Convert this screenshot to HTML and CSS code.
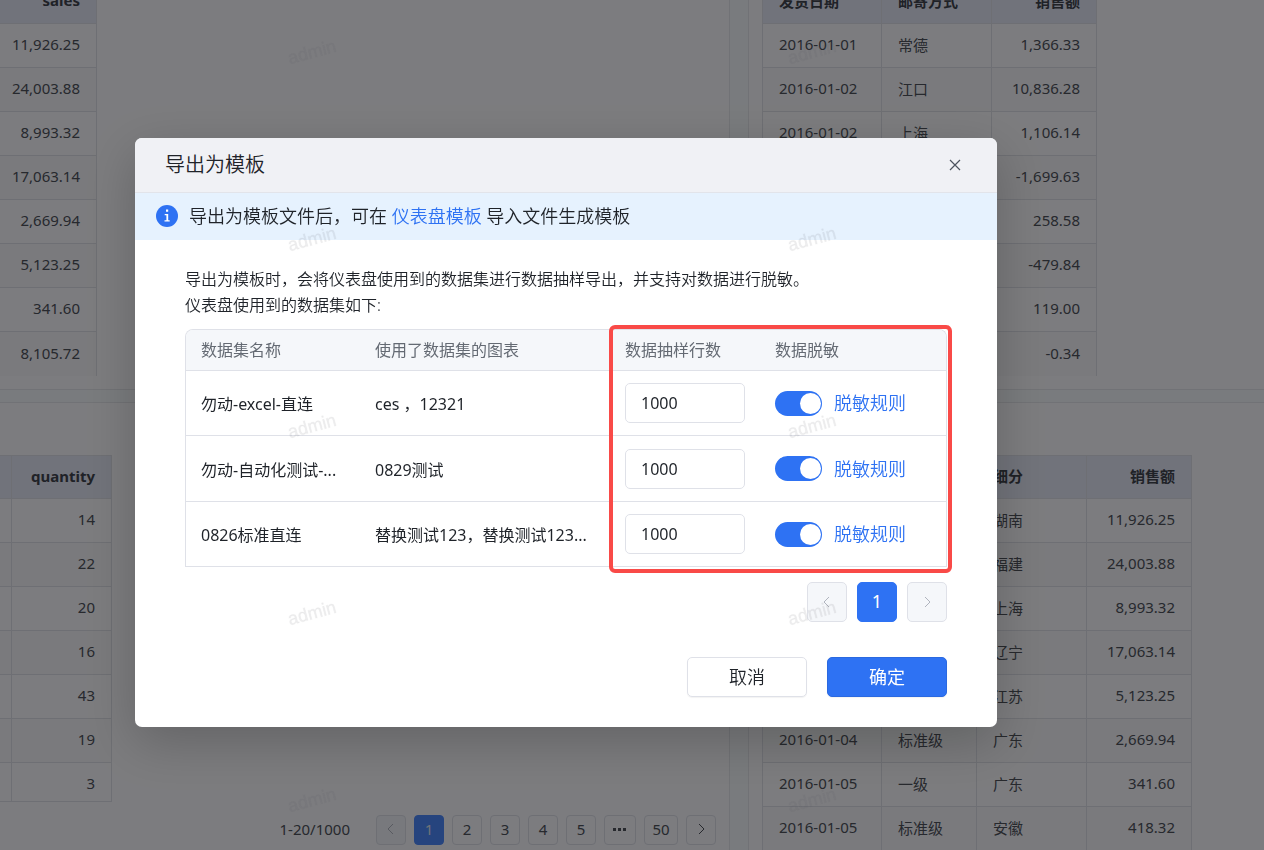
FILE: index.html
```html
<!DOCTYPE html>
<html lang="zh-CN">
<head>
<meta charset="utf-8">
<title>导出为模板</title>
<link rel="stylesheet" href="styles.css">
</head>
<body>
<main class="board">
  <section class="panel panel-top">
    <table class="grid grid-sales">
      <thead><tr><th class="num">sales</th></tr></thead>
      <tbody>
        <tr><td class="num">11,926.25</td></tr>
        <tr><td class="num">24,003.88</td></tr>
        <tr><td class="num">8,993.32</td></tr>
        <tr><td class="num">17,063.14</td></tr>
        <tr><td class="num">2,669.94</td></tr>
        <tr><td class="num">5,123.25</td></tr>
        <tr><td class="num">341.60</td></tr>
        <tr><td class="num">8,105.72</td></tr>
      </tbody>
    </table>
  </section>
  <section class="panel panel-top panel-right">
    <table class="grid grid-ship">
      <colgroup><col class="c-date"><col class="c-area"><col class="c-num"></colgroup>
      <thead><tr><th>发货日期</th><th>邮寄方式</th><th class="num">销售额</th></tr></thead>
      <tbody>
        <tr><td>2016-01-01</td><td>常德</td><td class="num">1,366.33</td></tr>
        <tr><td>2016-01-02</td><td>江口</td><td class="num">10,836.28</td></tr>
        <tr><td>2016-01-02</td><td>上海</td><td class="num">1,106.14</td></tr>
        <tr><td></td><td></td><td class="num">-1,699.63</td></tr>
        <tr><td></td><td></td><td class="num">258.58</td></tr>
        <tr><td></td><td></td><td class="num">-479.84</td></tr>
        <tr><td></td><td></td><td class="num">119.00</td></tr>
        <tr><td></td><td></td><td class="num">-0.34</td></tr>
      </tbody>
    </table>
  </section>
  <section class="panel panel-bottom">
    <div class="clip">
      <table class="grid grid-qty">
        <colgroup><col class="c-sliver"><col class="c-qty"></colgroup>
        <thead><tr><th></th><th class="num">quantity</th></tr></thead>
        <tbody>
          <tr><td></td><td class="num">14</td></tr>
          <tr><td></td><td class="num">22</td></tr>
          <tr><td></td><td class="num">20</td></tr>
          <tr><td></td><td class="num">16</td></tr>
          <tr><td></td><td class="num">43</td></tr>
          <tr><td></td><td class="num">19</td></tr>
          <tr><td></td><td class="num">3</td></tr>
        </tbody>
      </table>
    </div>
    <nav class="pager" aria-label="分页">
      <span class="pager-total">1-20/1000</span>
      <button class="page off" aria-label="上一页" disabled><svg viewBox="0 0 12 12"><path d="M8 1 3 6l5 5"/></svg></button>
      <button class="page current">1</button>
      <button class="page">2</button>
      <button class="page">3</button>
      <button class="page">4</button>
      <button class="page">5</button>
      <button class="page dots" aria-label="更多"><svg viewBox="0 0 14 4"><path d="M0 1h3v3H0zM5 1h3v3H5zM10 1h3v3h-3z"/></svg></button>
      <button class="page wide">50</button>
      <button class="page" aria-label="下一页"><svg viewBox="0 0 12 12"><path d="m4 1 5 5-5 5"/></svg></button>
    </nav>
  </section>
  <section class="panel panel-bottom panel-right">
    <table class="grid grid-region">
      <colgroup><col class="c-date"><col class="c-mode"><col class="c-area"><col class="c-num"></colgroup>
      <thead><tr><th></th><th></th><th>细分</th><th class="num">销售额</th></tr></thead>
      <tbody>
        <tr><td></td><td></td><td>湖南</td><td class="num">11,926.25</td></tr>
        <tr><td></td><td></td><td>福建</td><td class="num">24,003.88</td></tr>
        <tr><td></td><td></td><td>上海</td><td class="num">8,993.32</td></tr>
        <tr><td></td><td></td><td>辽宁</td><td class="num">17,063.14</td></tr>
        <tr><td></td><td></td><td>江苏</td><td class="num">5,123.25</td></tr>
        <tr><td>2016-01-04</td><td>标准级</td><td>广东</td><td class="num">2,669.94</td></tr>
        <tr><td>2016-01-05</td><td>一级</td><td>广东</td><td class="num">341.60</td></tr>
        <tr><td>2016-01-05</td><td>标准级</td><td>安徽</td><td class="num">418.32</td></tr>
      </tbody>
    </table>
  </section>
</main>

<div class="mask">
  <div class="dialog" role="dialog" aria-modal="true" aria-labelledby="dialog-title">
    <header class="dialog-head">
      <h1 class="dialog-title" id="dialog-title">导出为模板</h1>
      <button class="close" aria-label="关闭"><svg viewBox="0 0 12 12"><path d="m1 1 10 10M11 1 1 11"/></svg></button>
    </header>
    <div class="notice">
      <svg class="notice-icon" viewBox="0 0 22 22"><circle cx="11" cy="11" r="11" fill="#2e72f3"/><path d="M10 4.500h2.200v2.200H10zM8.700 9h3.500v6.200h1.500v1.300H8.500v-1.300h1.900v-4.900H8.700z" fill="#fff"/></svg>
      <p class="notice-text">导出为模板文件后，可在 <a href="#">仪表盘模板</a> 导入文件生成模板</p>
    </div>
    <div class="dialog-body">
      <p class="intro">导出为模板时，会将仪表盘使用到的数据集进行数据抽样导出，并支持对数据进行脱敏。<br>仪表盘使用到的数据集如下:</p>
      <div class="sets-wrap">
        <table class="sets">
          <colgroup><col class="s-name"><col class="s-chart"><col class="s-rows"><col></colgroup>
          <thead><tr><th>数据集名称</th><th>使用了数据集的图表</th><th>数据抽样行数</th><th>数据脱敏</th></tr></thead>
          <tbody>
            <tr>
              <td>勿动-excel-直连</td><td>ces ，12321</td>
              <td><input class="rows" type="text" value="1000" aria-label="数据抽样行数"></td>
              <td><div class="mask-cell"><input class="switch" type="checkbox" checked aria-label="数据脱敏"><a href="#">脱敏规则</a></div></td>
            </tr>
            <tr>
              <td>勿动-自动化测试-...</td><td>0829测试</td>
              <td><input class="rows" type="text" value="1000" aria-label="数据抽样行数"></td>
              <td><div class="mask-cell"><input class="switch" type="checkbox" checked aria-label="数据脱敏"><a href="#">脱敏规则</a></div></td>
            </tr>
            <tr>
              <td>0826标准直连</td><td>替换测试123，替换测试123...</td>
              <td><input class="rows" type="text" value="1000" aria-label="数据抽样行数"></td>
              <td><div class="mask-cell"><input class="switch" type="checkbox" checked aria-label="数据脱敏"><a href="#">脱敏规则</a></div></td>
            </tr>
          </tbody>
        </table>
        <div class="highlight"></div>
      </div>
      <nav class="sets-pager" aria-label="数据集分页">
        <button class="step" aria-label="上一页" disabled><svg viewBox="0 0 12 12"><path d="M8 1 3 6l5 5"/></svg></button>
        <button class="step current">1</button>
        <button class="step" aria-label="下一页" disabled><svg viewBox="0 0 12 12"><path d="m4 1 5 5-5 5"/></svg></button>
      </nav>
      <footer class="actions">
        <button class="btn">取消</button>
        <button class="btn primary">确定</button>
      </footer>
    </div>
  </div>
</div>

<div class="watermark" aria-hidden="true">
  <span>admin</span><span>admin</span><span>admin</span><span>admin</span><span>admin</span>
  <span>admin</span><span>admin</span><span>admin</span><span>admin</span><span>admin</span>
</div>
</body>
</html>
```
FILE: styles.css
```css
* { box-sizing: border-box; }

body {
  margin: 0;
  height: 100vh;
  overflow: hidden;
  font-family: "Noto Sans", "Noto Sans CJK SC", sans-serif;
  font-size: 16px;
  color: #1f2329;
  background: #f3f6fa;
}

button, input { font: inherit; color: inherit; }
a { color: #2e72f3; text-decoration: none; }
h1, p { margin: 0; font-weight: 400; }

/* dashboard */
.board {
  display: grid;
  grid-template-columns: 730fr 516fr;
  grid-template-rows: auto minmax(0, 1fr);
  gap: 12px 18px;
  height: 100vh;
  font-size: 15px;
  color: #4e525a;
}
.panel {
  display: flex;
  flex-direction: column;
  align-items: flex-start;
  min-width: 0;
  overflow: hidden;
  background: #f8f9fd;
  border: 0 solid #e2e4ea;
}
.panel-top { padding-bottom: 13px; border-bottom-width: 1px; border-right-width: 1px; }
.panel-bottom { padding-top: 52px; border-top-width: 1px; border-right-width: 1px; }
.panel-right { padding-left: 13px; border-left-width: 1px; border-right-width: 0; }
.panel-top .grid { margin-top: -20px; }

.grid { table-layout: fixed; border-collapse: separate; border-spacing: 0; border-right: 1px solid #dcdee7; }
.grid th, .grid td {
  height: 44px;
  padding: 0 16px 3px;
  text-align: left;
  white-space: nowrap;
  border: 0 solid #dcdee7;
  border-width: 0 0 1px 1px;
}
.grid th { font-weight: 700; background: #e2e6f5; color: #40444d; }
.grid .num { text-align: right; }
.grid tbody tr:nth-child(even) { background: #f4f5f9; }
.panel-top .grid tbody tr:last-child td { border-bottom: 0; }
.panel-bottom .grid th { border-top-width: 1px; }
.grid tr > :first-child { border-left-width: 0; }
.panel-right .grid tr > :first-child { border-left-width: 1px; }
.grid .c-date { width: 119px; }
.grid .c-mode { width: 95px; }
.grid .c-area { width: 110px; }
.grid .c-num { width: 105px; }
.grid .c-sliver { width: 11px; }
.grid .c-qty { width: 100px; }
.grid-sales { width: 97px; }
.grid-sales th, .grid-sales td { padding-left: 0; }
.grid-ship { width: 335px; }
.grid-qty { width: 112px; }
.grid-qty tr > :first-child { padding: 0; }
.grid-region { width: 430px; }

.clip { flex: 1; min-height: 0; overflow: hidden; border-bottom: 1px solid #dcdee7; }

.pager {
  display: flex;
  align-items: center;
  align-self: stretch;
  justify-content: flex-end;
  gap: 8px;
  padding: 13px 13px 5px;
}
.pager-total { margin-right: 18px; line-height: 20px; padding-bottom: 2px; }
.page {
  display: flex;
  align-items: center;
  justify-content: center;
  min-width: 30px;
  height: 30px;
  padding: 0 0 2px;
  border: 1px solid #dcdee7;
  border-radius: 4px;
  background: transparent;
}
.page svg, .step svg, .close svg { width: 12px; height: 12px; fill: none; stroke: currentColor; stroke-width: 1; }
.page.off { background: #f0f3f8; color: #b0b4be; }
.page.current { background: #4c88fa; border-color: #4c88fa; color: #dfe4ee; }
.page.dots { width: 32px; }
.page.dots svg { width: 14px; height: 4px; fill: currentColor; stroke: none; }
.page.wide { width: 34px; }

/* dialog */
.mask {
  position: fixed;
  inset: 0;
  display: flex;
  align-items: flex-start;
  padding: 138px 267px 0 135px;
  background: rgba(0, 0, 2, 0.5);
}
.dialog {
  flex: 1;
  min-width: 0;
  overflow: hidden;
  border-radius: 7px;
  background: #fff;
  box-shadow: 0 15px 50px rgba(0, 0, 0, 0.2);
}
.dialog-head {
  display: flex;
  align-items: center;
  justify-content: space-between;
  height: 55px;
  padding: 0 30px;
  background: #f0f1f5;
  border-bottom: 1px solid #e2e4ea;
}
.dialog-title { font-size: 20px; line-height: 28px; font-weight: 350; }
.close {
  display: flex;
  align-items: center;
  justify-content: center;
  width: 24px;
  height: 24px;
  padding: 0;
  border: 0;
  background: none;
  color: #4c535f;
}
.close svg { stroke-width: 1.2; }
.notice {
  display: flex;
  align-items: center;
  gap: 11px;
  height: 47px;
  padding: 0 21px 2px;
  background: #e6f2fe;
}
.notice-icon { width: 22px; height: 22px; }
.notice-text { font-size: 18px; line-height: 26px; font-weight: 350; }
.dialog-body { padding: 26px 50px 30px; }
.intro { line-height: 26px; font-weight: 350; }

.sets-wrap { position: relative; margin-top: 11px; }
.sets {
  width: 100%;
  table-layout: fixed;
  border-collapse: separate;
  border-spacing: 0;
  overflow: hidden;
  border: 1px solid #dfe1e8;
  border-bottom: 0;
  border-radius: 8px 8px 0 0;
}
.sets th, .sets td {
  padding: 0 0 0 15px;
  text-align: left;
  white-space: nowrap;
  font-weight: 400;
  border-bottom: 1px solid #dfe1e8;
}
.sets th { height: 41px; padding-bottom: 2px; background: #f5f7fa; color: #646a73; }
.sets td { height: 65px; }
.sets tr:nth-child(2) td { height: 66px; }
.s-name { width: 174px; }
.s-chart { width: 250px; }
.s-rows { width: 150px; }
.rows {
  display: block;
  width: 120px;
  height: 40px;
  padding: 0 15px;
  border: 1px solid #dfe1e8;
  border-radius: 5px;
  background: #fff;
}
.mask-cell { display: flex; align-items: center; gap: 12px; font-size: 18px; line-height: 26px; font-weight: 350; }
.switch {
  appearance: none;
  display: flex;
  justify-content: flex-end;
  width: 47px;
  height: 25px;
  margin: 0;
  padding: 2px 1px;
  border-radius: 13px;
  background: #2e72f3;
}
.switch::before { content: ""; width: 21px; height: 21px; border-radius: 50%; background: #fff; }
.highlight {
  position: absolute;
  inset: -4px -5px -6px 424px;
  border: 4px solid #f94a47;
  border-radius: 6px;
  pointer-events: none;
}

.sets-pager { display: flex; justify-content: flex-end; gap: 10px; margin-top: 15px; }
.step {
  display: flex;
  align-items: center;
  justify-content: center;
  width: 40px;
  height: 40px;
  padding: 0;
  border: 1px solid #dfe1e8;
  border-radius: 5px;
  background: #f5f7fa;
  color: #b0b4be;
}
.step.current { background: #2e72f3; border-color: #2e72f3; color: #fff; font-size: 18px; padding-bottom: 2px; }
.actions { display: flex; justify-content: flex-end; gap: 20px; margin-top: 35px; }
.btn {
  width: 120px;
  height: 40px;
  padding: 0 0 2px;
  border: 1px solid #dfe1e8;
  border-radius: 5px;
  background: #fff;
  font-size: 18px;
  font-weight: 350;
  box-shadow: 0 1px 1px rgba(0, 0, 0, 0.05);
}
.btn.primary { background: #2e72f3; border-color: #2b69e0; color: #fff; font-weight: 400; }

.watermark {
  position: fixed;
  inset: 0;
  display: grid;
  grid-template-columns: repeat(2, 500px);
  grid-auto-rows: 187px;
  padding-left: 62px;
  overflow: hidden;
  pointer-events: none;
  font-family: "Liberation Sans", sans-serif;
  font-size: 18px;
  -webkit-text-stroke: 1px rgba(100, 100, 110, 0.04);
  color: rgba(100, 100, 110, 0.1);
}
.watermark span { width: 500px; height: 104px; line-height: 104px; text-align: center; transform: rotate(-15deg); }
```
